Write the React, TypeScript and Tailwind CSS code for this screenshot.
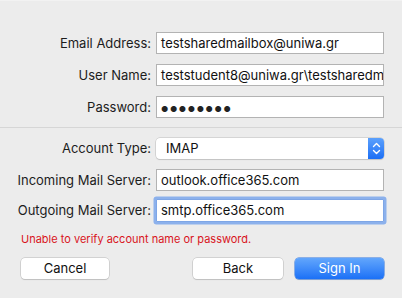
import React from "react";

const font = { fontFamily: "Inter, 'Liberation Sans', sans-serif" };

function Field({ label, value, focused, mt }: { label: string; value: React.ReactNode; focused?: boolean; mt: string }) {
  return (
    <div className={`flex items-center ${mt}`}>
      <div className="w-[151px] text-right text-[13px] text-[#1c1c1c] leading-none whitespace-nowrap">{label}</div>
      <div className="ml-[5px] w-[228px]">
        <div
          className={
            focused
              ? "h-[23px] bg-white border border-[#7ea6e6] rounded-[1px] shadow-[0_0_0_2.5px_#8cb1ec] flex items-center pl-[4px] overflow-hidden"
              : "h-[22px] bg-white border border-[#b3b3b3] flex items-center pl-[4px] overflow-hidden"
          }
        >
          <span className="text-[13px] text-[#111] whitespace-nowrap leading-none">{value}</span>
        </div>
      </div>
    </div>
  );
}

export default function App() {
  return (
    <div className="w-[402px] h-[298px] bg-[#ececec] overflow-hidden border-t border-[#f2f2f2]" style={font}>
      <div className="pt-[31px]">
        <Field label="Email Address:" value="testsharedmailbox@uniwa.gr" mt="mt-0" />
        <Field label="User Name:" value="teststudent8@uniwa.gr\testsharedmailbox" mt="mt-[10px]" />
        <Field
          label="Password:"
          value={<span className="text-[8px] tracking-[1.6px] text-[#222]">●●●●●●●●</span>}
          mt="mt-[10px]"
        />
        <div className="mt-[9px] h-px bg-[#d6d6d6]" />
        <div className="flex items-center mt-[10px]">
          <div className="w-[151px] text-right text-[13px] text-[#1c1c1c] leading-none">Account Type:</div>
          <div className="ml-[5px] w-[228px] h-[21px] bg-white rounded-[4px] shadow-[0_0_0_0.5px_#bdbdbd,0_1px_1px_rgba(0,0,0,0.15)] flex items-center overflow-hidden">
            <span className="pl-[10px] flex-1 text-[13px] text-[#111] leading-none">IMAP</span>
            <div className="w-[16px] h-full bg-gradient-to-b from-[#5ba0fc] to-[#1a6ef5] flex items-center justify-center">
              <svg width="9" height="13" viewBox="0 0 9 13" fill="none" stroke="white" strokeWidth="1.4" strokeLinecap="round" strokeLinejoin="round">
                <path d="M1.5 4.5 L4.5 1.5 L7.5 4.5" />
                <path d="M1.5 8.5 L4.5 11.5 L7.5 8.5" />
              </svg>
            </div>
          </div>
        </div>
        <Field label="Incoming Mail Server:" value="outlook.office365.com" mt="mt-[10px]" />
        <Field label="Outgoing Mail Server:" value="smtp.office365.com" focused mt="mt-[8px]" />
        <div className="mt-[12px] pl-[21px] text-[11px] text-[#d9141c] leading-none">
          Unable to verify account name or password.
        </div>
        <div className="mt-[13px] flex items-center">
          <button className="ml-[21px] w-[88px] h-[21px] bg-white rounded-[4px] shadow-[0_0_0_0.5px_#b8b8b8,0_1px_1px_rgba(0,0,0,0.15)] text-[13px] text-[#111] leading-none">
            Cancel
          </button>
          <button className="ml-[84px] w-[90px] h-[21px] bg-white rounded-[4px] shadow-[0_0_0_0.5px_#b8b8b8,0_1px_1px_rgba(0,0,0,0.15)] text-[13px] text-[#111] leading-none">
            Back
          </button>
          <button className="ml-[12px] w-[89px] h-[21px] rounded-[4px] bg-gradient-to-b from-[#62a6fc] to-[#1a70f6] shadow-[0_0_0_0.5px_#2a73e0,0_1px_1px_rgba(0,0,0,0.15)] text-[13px] text-white leading-none">
            Sign In
          </button>
        </div>
      </div>
    </div>
  );
}
